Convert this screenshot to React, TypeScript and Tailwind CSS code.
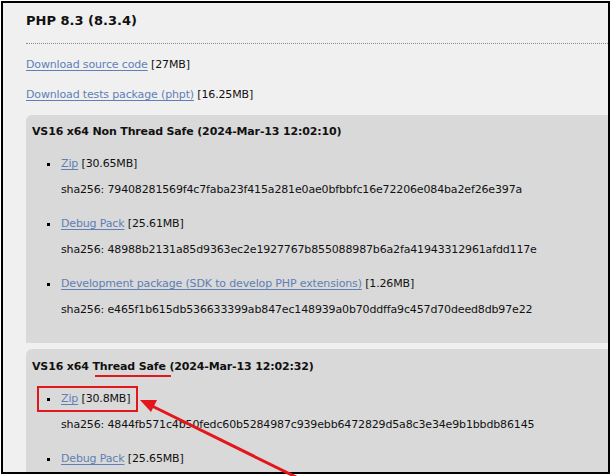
import React from 'react';

interface Build {
  title: React.ReactNode;
  files: { label: string; size: string; sha: string }[];
}

const BUILDS: Build[] = [
  {
    title: 'VS16 x64 Non Thread Safe (2024-Mar-13 12:02:10)',
    files: [
      { label: 'Zip', size: '[30.65MB]', sha: '79408281569f4c7faba23f415a281e0ae0bfbbfc16e72206e084ba2ef26e397a' },
      { label: 'Debug Pack', size: '[25.61MB]', sha: '48988b2131a85d9363ec2e1927767b855088987b6a2fa41943312961afdd117e' },
      {
        label: 'Development package (SDK to develop PHP extensions)',
        size: '[1.26MB]',
        sha: 'e465f1b615db536633399ab847ec148939a0b70ddffa9c457d70deed8db97e22',
      },
    ],
  },
  {
    title: 'VS16 x64 Thread Safe (2024-Mar-13 12:02:32)',
    files: [
      { label: 'Zip', size: '[30.8MB]', sha: '4844fb571c4b50fedc60b5284987c939ebb6472829d5a8c3e34e9b1bbdb86145' },
      { label: 'Debug Pack', size: '[25.65MB]', sha: '' },
    ],
  },
];

function Link({ children }: { children: React.ReactNode }) {
  return <a className="text-[#5f7fb6] underline underline-offset-2 decoration-1">{children}</a>;
}

function BuildBox({ build, pad }: { build: Build; pad: string }) {
  return (
    <div className={`bg-[#d9d9d9] rounded-tl-[6px] pl-[6px] ${pad}`}>
      <h3 className="font-bold text-[11px] leading-[14px]">{build.title}</h3>
      <ul className="mt-[18px] pl-[15px]">
        {build.files.map((f, i) => (
          <li key={i} className={i > 0 ? 'mt-[20px]' : ''}>
            <div className="flex items-center leading-[14px]">
              <span className="w-[3px] h-[3px] bg-black mr-[11px]" />
              <span>
                <Link>{f.label}</Link> {f.size}
              </span>
            </div>
            {f.sha && <p className="mt-[12px] pl-[14px] leading-[14px]">sha256: {f.sha}</p>}
          </li>
        ))}
      </ul>
    </div>
  );
}

export default function App() {
  return (
    <div
      className="relative w-[613px] h-[476px] bg-white overflow-hidden text-[11px] tracking-[-0.15px] text-[#111]"
      style={{ fontFamily: '"DejaVu Sans", Verdana, sans-serif' }}
    >
      <div className="ml-[1px] mt-[1px] w-[609px] h-[473px] border-2 border-black bg-[#f0f0f0] overflow-hidden pl-[23px]">
        <h2 className="mt-[9px] font-bold text-[13px] leading-[18px] tracking-normal">PHP 8.3 (8.3.4)</h2>
        <div className="mt-[13px] border-b border-dotted border-[#8a8a8a]" />
        <p className="mt-[14px] leading-[14px]">
          <Link>Download source code</Link> [27MB]
        </p>
        <p className="mt-[16px] leading-[14px]">
          <Link>Download tests package (phpt)</Link> [16.25MB]
        </p>
        <div className="mt-[13px] flex flex-col gap-[6px]">
          <BuildBox build={BUILDS[0]} pad="pt-[10px] pb-[26px]" />
          <BuildBox build={BUILDS[1]} pad="pt-[11px] pb-[27px]" />
        </div>
      </div>

      {/* annotations */}
      <div className="absolute left-[95px] top-[375px] w-[76px] h-[2px] bg-[#e3161b]" />
      <div className="absolute left-[37px] top-[386px] w-[101px] h-[26px] border-2 border-[#e3161b]" />
      <svg className="absolute left-0 top-0" width="613" height="476" viewBox="0 0 613 476">
        <line x1="298" y1="478" x2="152" y2="406" stroke="#e3161b" strokeWidth="3" />
        <polygon points="140,400 157,400 151,412" fill="#e3161b" />
      </svg>
    </div>
  );
}
